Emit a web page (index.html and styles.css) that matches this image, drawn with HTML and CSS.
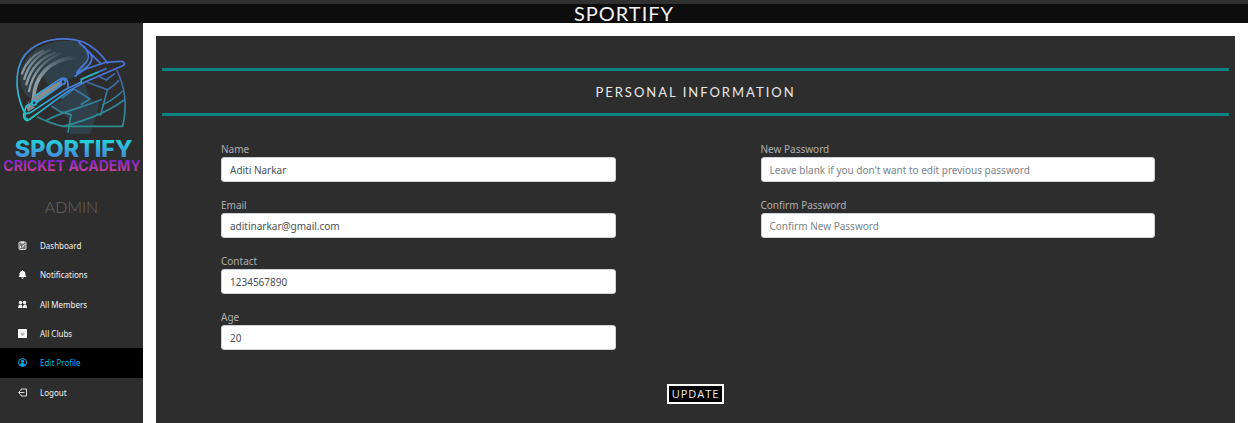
FILE: index.html
```html
<!DOCTYPE html>
<html lang="en">
<head>
<meta charset="utf-8">
<meta name="viewport" content="width=device-width, initial-scale=1">
<title>Sportify</title>
<link rel="stylesheet" href="styles.css">
</head>
<body>
<header class="topbar">SPORTIFY</header>
<div class="layout">
  <aside class="sidebar">
    <svg class="logo" viewBox="0 9 429 450" role="img" aria-label="Sportify Cricket Academy">
      <defs>
        <linearGradient id="shell" gradientUnits="userSpaceOnUse" x1="250" y1="60" x2="70" y2="290"><stop offset="0" stop-color="#4a72dc"/><stop offset="0.45" stop-color="#4680d8"/><stop offset="1" stop-color="#22ccd2"/></linearGradient>
        <linearGradient id="grille" x1="0" y1="0" x2="0" y2="1"><stop offset="0" stop-color="#465eb0"/><stop offset="0.5" stop-color="#337f9d"/><stop offset="1" stop-color="#2b918c"/></linearGradient>
        <linearGradient id="name" x1="0" y1="0" x2="0" y2="1"><stop offset="0.2" stop-color="#22d4dc"/><stop offset="0.85" stop-color="#4a86dc"/></linearGradient>
        <linearGradient id="sub" x1="0" y1="0" x2="0" y2="1"><stop offset="0.2" stop-color="#7d22cc"/><stop offset="0.85" stop-color="#c5439a"/></linearGradient>
        <linearGradient id="stripe" x1="0" y1="1" x2="1" y2="0"><stop offset="0.3" stop-color="#8f9ba1"/><stop offset="1" stop-color="#30404b"/></linearGradient>
      </defs>
      <path fill="#30404b" d="M62 160C75 90 145 58 220 63L250 75C280 115 260 150 225 170L205 178L188 172L150 195C130 185 135 165 120 158L90 235C65 215 58 190 62 160ZM160 255L255 190L270 240L298 248L290 285L270 342H210L213 300Z"/>
      <g fill="none" stroke="url(#stripe)" stroke-linecap="round">
        <path stroke-width="7" d="M66 160C78 128 100 105 130 92M73 177C85 135 112 106 150 90M79 193C92 146 121 113 167 98M87 213C98 159 128 121 185 99"/>
        <path stroke-width="11" d="M100 238C104 172 143 118 232 111"/>
      </g>
      <path fill="#858c90" d="M82 248L98 238L110 246L182 196L188 178L105 225L78 258L84 275L105 262Z"/>
      <g fill="none" stroke="url(#grille)" stroke-width="5" stroke-linejoin="round">
        <path d="M350 150C374 198 382 259 368 319H190C160 312 135 303 112 290M190 319C255 302 325 276 372 240M137 302C190 272 235 268 306 238M306 255Q340 240 368 213M322 209Q342 198 357 181M185 235L222 207L270 237L242 254M262 187L322 209L302 285L290 281M155 258L180 275L213 284L204 338M298 170L318 180L345 160"/>
      </g>
      <g fill="none" stroke="url(#shell)" stroke-width="5" stroke-linecap="round" stroke-linejoin="round">
        <path d="M73 277C40 207 42 126 93 87C140 51 206 51 251 67C281 80 303 102 323 130M237 68C264 92 284 113 302 130M258 88C281 105 280 123 262 139C250 152 235 152 228 168M252 79C269 102 271 119 251 134L230 158M225 168L255 148L318 127L360 124C374 123 377 132 368 137L260 184L205 213L105 286L83 302C70 299 68 284 75 271L78 259L98 248M76 282L92 277L199 207L244 186M105 227L181 177C198 168 205 181 204 201M112 246L185 195M244 178L318 146"/>
        <circle cx="102" cy="248" r="7"/><circle cx="189" cy="185" r="7"/>
      </g>
      <path fill="none" stroke="#25b9b6" stroke-width="5" d="M244 189V178L295 156M76 275L75 292L86 300L114 280"/>
      <text class="logo-name" x="221" y="410" fill="url(#name)">SPORTIFY</text>
      <text class="logo-sub" x="216" y="452" fill="url(#sub)">CRICKET ACADEMY</text>
    </svg>
    <h2 class="role">ADMIN</h2>
    <nav class="menu">
      <a class="item" href="#"><svg class="icon" viewBox="0 0 18 18"><rect x="2" y="2" width="14" height="15" rx="2" fill="#777" stroke="#d4dce2" stroke-width="2"/><path d="M6 1h6v4H6z" fill="#e5e5e5"/><path d="M5 14V10M8 13l5-6" stroke="#fff" stroke-width="2"/></svg>Dashboard</a>
      <a class="item" href="#"><svg class="icon" viewBox="0 0 18 18"><path fill="#fff" d="M8 0h2v2c5 1 5 5 5 9l2 3H1l2-3c0-4 0-8 5-9zM6 15h6l-3 3z"/></svg>Notifications</a>
      <a class="item" href="#"><svg class="icon" viewBox="0 0 18 18"><g fill="#f2f2f2"><circle cx="5" cy="5" r="3.5"/><circle cx="13" cy="5" r="3.5"/><path d="M0 16c0-5 2-7 5-7s4 2 4 7zM10 16c0-5 1-7 4-7s4 2 4 7z"/></g></svg>All Members</a>
      <a class="item" href="#"><svg class="icon" viewBox="0 0 18 18"><rect width="18" height="18" rx="1" fill="#fff"/><path d="M3 6h12M5 9h8l-3 4H8z" fill="#aaa" stroke="#aaa"/></svg>All Clubs</a>
      <a class="item active" href="#" aria-current="page"><svg class="icon" viewBox="0 0 18 18"><circle cx="9" cy="9" r="8" fill="none" stroke="currentColor" stroke-width="2"/><circle cx="9" cy="6.5" r="3" fill="currentColor"/><path d="M4 14c1-3 3-4 5-4s4 1 5 4c-3 3-7 3-10 0z" fill="currentColor"/></svg>Edit Profile</a>
      <a class="item" href="#"><svg class="icon" viewBox="0 0 18 18"><path d="M6 5V2h11v14H6v-3M13 9H2M5 5L1 9l4 4" fill="none" stroke="#d8d8d8" stroke-width="2"/></svg>Logout</a>
    </nav>
  </aside>
  <main class="content">
    <form class="panel">
      <h1 class="title">PERSONAL INFORMATION</h1>
      <div class="columns">
        <div class="column">
          <div class="field"><label for="name-field">Name</label><input id="name-field" type="text" value="Aditi Narkar"></div>
          <div class="field"><label for="email">Email</label><input id="email" type="email" value="aditinarkar@gmail.com"></div>
          <div class="field"><label for="contact">Contact</label><input id="contact" type="tel" value="1234567890"></div>
          <div class="field"><label for="age">Age</label><input id="age" type="text" inputmode="numeric" value="20"></div>
        </div>
        <div class="column">
          <div class="field"><label for="new-password">New Password</label><input id="new-password" type="password" placeholder="Leave blank if you don't want to edit previous password"></div>
          <div class="field"><label for="confirm-password">Confirm Password</label><input id="confirm-password" type="password" placeholder="Confirm New Password"></div>
        </div>
      </div>
      <button class="update" type="button">UPDATE</button>
    </form>
  </main>
</div>
</body>
</html>
```
FILE: styles.css
```css
* { box-sizing: border-box; }

body {
  margin: 0;
  min-height: 100vh;
  display: flex;
  flex-direction: column;
  background: #fff;
  font-family: "Noto Sans", sans-serif;
}

.topbar {
  border-top: 4px solid #303030;
  background: #0d0d0d;
  color: #f2f2f2;
  font: 400 20px/19px Lato, sans-serif;
  letter-spacing: 1px;
  text-align: center;
}

.layout { flex: 1; display: flex; }

.sidebar {
  flex: none;
  width: 143px;
  background: #2d2d2d;
}

.logo { display: block; width: 100%; }

.logo-name, .logo-sub {
  font-family: Inter, sans-serif;
  text-anchor: middle;
}

.logo-name { font-size: 70px; font-weight: 800; }
.logo-sub { font-size: 42px; font-weight: 700; }

.role {
  margin: 24px 0 14px;
  color: #686868;
  font: 300 16px/20px Lato, sans-serif;
  text-align: center;
}

.menu {
  display: grid;
  grid-auto-rows: 1fr;
  height: 176px;
}

.item {
  display: flex;
  align-items: center;
  gap: 13px;
  padding-left: 18px;
  color: #f2f2f2;
  font: 400 8px/13px "Noto Sans", sans-serif;
  text-decoration: none;
}

.icon { width: 9px; height: 9px; }
.active { background: #000; color: #00b3ee; }

.content {
  flex: 1;
  display: flex;
  padding: 13px 13px 0;
}

.panel {
  flex: 1;
  padding-top: 32px;
  background: #2d2d2d;
}

.title {
  margin: 0 6px;
  padding: 11px 0;
  border: solid #0a8583;
  border-width: 3px 0;
  color: #e8e8e8;
  font: 400 13px/20px Lato, sans-serif;
  letter-spacing: 2px;
  text-align: center;
}

.columns {
  display: grid;
  grid-template-columns: 1fr 1fr;
  padding-top: 26px;
}

.column {
  display: flex;
  flex-direction: column;
  gap: 16px;
  padding: 0 80px 0 65px;
}

.field label {
  display: block;
  color: #adadad;
  font-size: 10px;
  line-height: 15px;
}

.field input {
  display: block;
  width: 100%;
  height: 25px;
  padding: 0 8px;
  border: 1px solid #ced4da;
  border-radius: 3px;
  background: #fff;
  color: #495057;
  font: 400 10px/15px "Noto Sans", sans-serif;
}

.field input::placeholder { color: #7b838a; opacity: 1; }

.update {
  display: block;
  margin: 34px auto 20px;
  padding: 0 3px;
  border: 2px solid #fff;
  background: #000;
  color: #eee;
  font: 400 11px/16px "Open Sans", sans-serif;
  letter-spacing: 1px;
}
```
